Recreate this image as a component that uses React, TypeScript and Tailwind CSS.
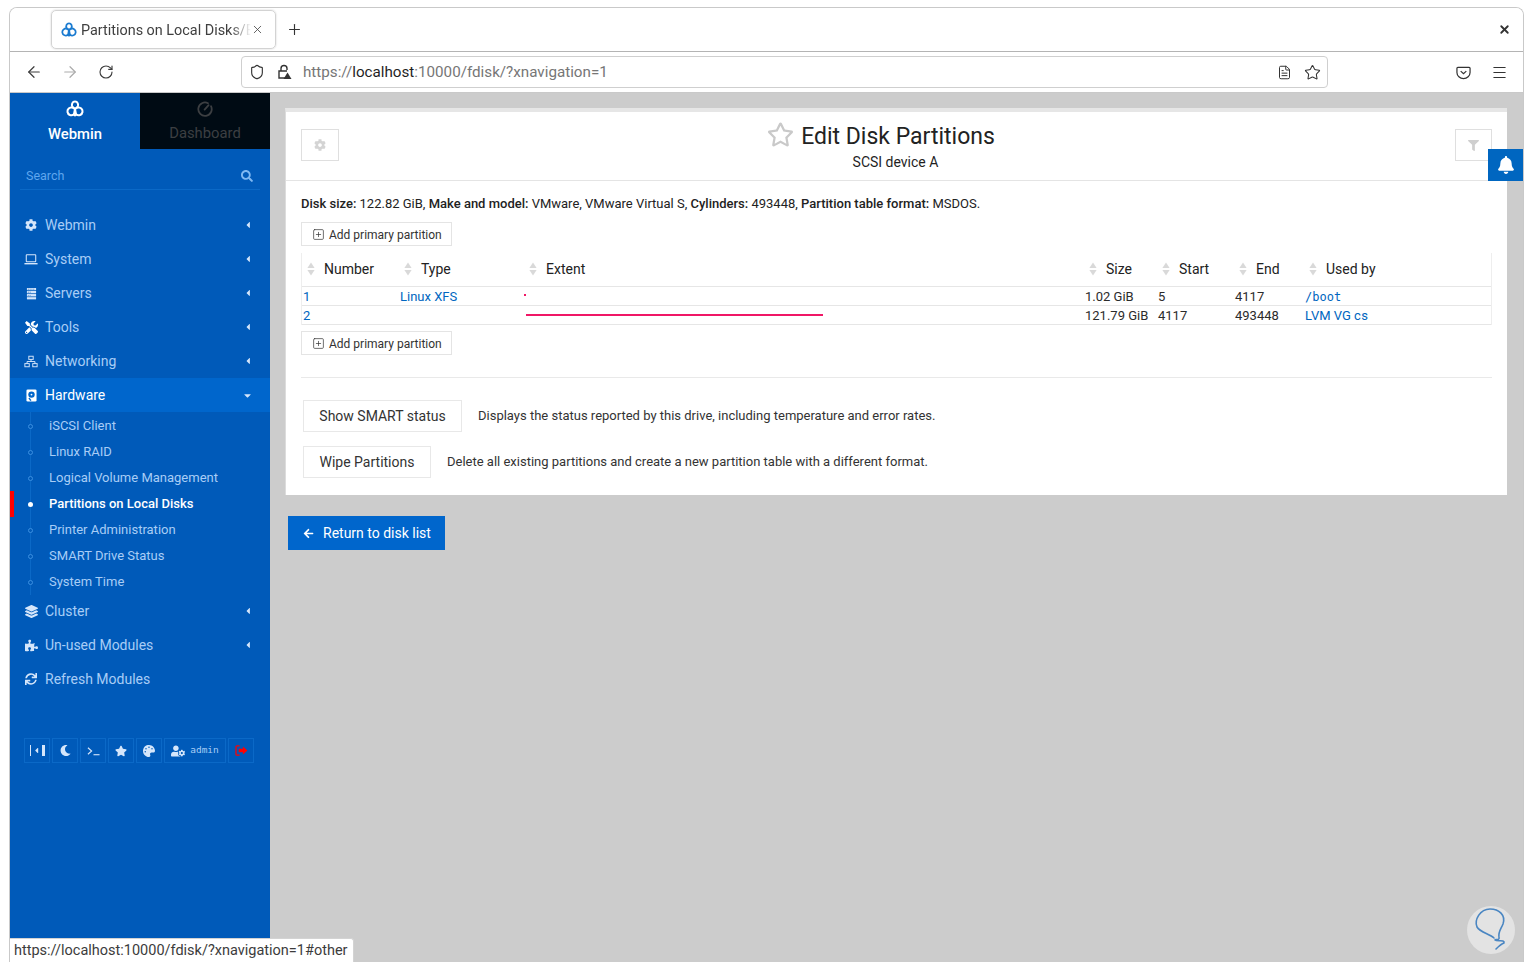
import React from "react";
import {
  FaCog, FaTools, FaLayerGroup, FaPuzzlePiece, FaSync, FaStar, FaPalette, FaMoon, FaUserCog,
  FaFilter, FaBell, FaArrowLeft, FaSearch, FaRegStar, FaCaretLeft, FaCaretDown,
} from "react-icons/fa";
import { ArrowLeft, ArrowRight, RotateCw, Shield, Plus, X, Menu, SquarePlus, Star, FileText } from "lucide-react";

function Logo({ className }: { className?: string }) {
  return (
    <svg viewBox="0 0 24 24" className={className} fill="none" stroke="currentColor" strokeWidth="2.7" strokeLinejoin="round" strokeLinecap="round">
      <path d="M12 12 L8.6 9.6 C6.6 6 8.6 2 12 2 C15.4 2 17.4 6 15.4 9.6 Z" />
      <path d="M12 12 L8.6 9.6 C4.6 9.6 1.4 12.4 2 16 C2.6 19.8 7 21.6 10.6 19.2 Z" />
      <path d="M12 12 L15.4 9.6 C19.4 9.6 22.6 12.4 22 16 C21.4 19.8 17 21.6 13.4 19.2 Z" />
      <path d="M10.6 19.2 C11.4 21 12.6 21 13.4 19.2" />
    </svg>
  );
}

function LaptopIcon() {
  return (
    <svg viewBox="0 0 16 14" className="w-[15px] h-[13px]" fill="none" stroke="currentColor" strokeWidth="1.2">
      <rect x="2.6" y="1.6" width="10.8" height="8" rx="0.6" />
      <path d="M0.5 11.8h15" strokeWidth="1.6" />
    </svg>
  );
}

function ServerIcon() {
  return (
    <svg viewBox="0 0 12 14" className="w-[11px] h-[13px]" fill="currentColor">
      <path d="M1 1h10v2.4H1z" />
      <path d="M1 4.2h10v2.6H1z" />
      <path d="M1 7.6h10v2.6H1z" />
      <path d="M1 11h10v2.4H1z" />
      <path d="M2 1.8h1v.8H2zM4 1.8h1v.8H4zM6 1.8h1v.8H6zM8 1.8h1v.8H8zM2 5.2h1v.6H2zM4 5.2h1v.6H4zM2 8.6h1v.6H2zM4 8.6h1v.6H4z" fill="#005ab9" />
    </svg>
  );
}

function NetIcon() {
  return (
    <svg viewBox="0 0 16 14" className="w-[15px] h-[13px]" fill="none" stroke="currentColor" strokeWidth="1.1">
      <rect x="5.5" y="1" width="5" height="3.6" />
      <rect x="1" y="9.4" width="5" height="3.6" />
      <rect x="10" y="9.4" width="5" height="3.6" />
      <path d="M8 4.6V7M3.5 9.4V7h9v2.4" />
    </svg>
  );
}

function DiskIcon() {
  return (
    <svg viewBox="0 0 12 14" className="w-[11px] h-[13px]">
      <rect x="0.5" y="0.5" width="11" height="13" rx="1.4" fill="#ffffff" />
      <circle cx="6" cy="6" r="3.5" fill="#0066cc" />
      <circle cx="6" cy="6" r="1" fill="#ffffff" />
      <path d="M4 9.5l2 2.6-1.4.8-2-2.8z" fill="#0066cc" />
    </svg>
  );
}

function NavItem({ icon, label, active, open, plain }: { icon: React.ReactNode; label: string; active?: boolean; open?: boolean; plain?: boolean }) {
  return (
    <div className={`h-[34px] flex items-center pl-[14px] pr-[17px] ${active ? "bg-[#0066cc] text-white" : "text-[#a8cdf6]"}`}>
      <span className={`w-[14px] flex justify-center ${active ? "text-white" : "text-[#d5e6fb]"}`}>{icon}</span>
      <span className="ml-[7px] text-[14px] flex-1">{label}</span>
      {open ? <FaCaretDown size={11} className="text-[#d5e6fb]" /> : !plain && <FaCaretLeft size={10} className="text-[#d5e6fb]" />}
    </div>
  );
}

function SubItem({ label, current }: { label: string; current?: boolean }) {
  return (
    <div className={`relative h-[26px] flex items-center pl-[39px] text-[13px] ${current ? "text-white font-medium" : "text-[#a8cdf6]"}`}>
      {current && <span className="absolute left-0 top-0 h-[26px] w-[4px] bg-[#ff0000]" />}
      <span className={`absolute left-[18px] top-[11px] w-[5px] h-[5px] rounded-full ${current ? "bg-white" : "border border-[#3b8fe0] bg-[#005ab9]"}`} />
      {label}
    </div>
  );
}

function IconBox({ children, className }: { children: React.ReactNode; className?: string }) {
  return (
    <div className={`h-[25px] border border-[#0b69c7] flex items-center justify-center text-[#d5e6fb] ${className ?? "w-[26px]"}`}>{children}</div>
  );
}

function HeadCell({ label }: { label: string }) {
  return (
    <div className="flex items-center">
      <svg viewBox="0 0 8 14" className="w-[8px] h-[14px] mr-[9px] text-[#d9d9d9]" fill="currentColor">
        <path d="M4 0.5 7.6 6H0.4Z" />
        <path d="M4 13.5 7.6 8H0.4Z" />
      </svg>
      <span>{label}</span>
    </div>
  );
}

function AddButton({ className }: { className: string }) {
  return (
    <button className={`${className} flex items-center h-[24px] w-[151px] border border-[#e4e4e4] pl-[10px] text-[12px] text-[#333]`}>
      <SquarePlus size={13} strokeWidth={1.3} />
      <span className="ml-[4px] mt-[1px]">Add primary partition</span>
    </button>
  );
}

const rowGrid = "grid grid-cols-[97px_125px_560px_73px_77px_70px_1fr] items-center";

export default function App() {
  return (
    <div className="w-[1533px] h-[971px] bg-white pt-[7px] pl-[9px] pr-[9px] overflow-hidden font-['Roboto',sans-serif]">
      <div className="relative w-[1515px] h-[955px] border border-[#c9c9c9] border-b-0 rounded-t-[8px] overflow-hidden flex flex-col bg-white">
        {/* tab strip */}
        <div className="h-[44px] shrink-0 border-b border-[#b4b4b4] flex items-center pl-[41px] pr-[12px] bg-white">
          <div className="w-[225px] h-[39px] rounded-[5px] border border-[#d3d3d3] shadow-[0_0_2px_rgba(0,0,0,0.2)] flex items-center pl-[9px] pr-[12px] pt-[2px] text-[14.4px] text-[#404040]">
            <Logo className="w-[16px] h-[16px] text-[#1b7bd0] shrink-0 -mt-[2px]" />
            <span className="ml-[4px] w-[170px] shrink-0 whitespace-nowrap [mask-image:linear-gradient(to_right,black_88%,transparent)]">Partitions on Local Disks/E</span>
            <X size={13} strokeWidth={1.5} className="shrink-0 text-[#444] -mt-[2px]" />
          </div>
          <Plus size={17} strokeWidth={1.6} className="ml-[10px] text-[#333]" />
          <span className="flex-1" />
          <X size={13} strokeWidth={3.4} className="text-[#333]" />
        </div>
        {/* toolbar */}
        <div className="h-[40px] shrink-0 flex items-center pl-[15px] bg-white">
          <ArrowLeft size={18} strokeWidth={1.6} className="text-[#3c3c3c]" />
          <ArrowRight size={18} strokeWidth={1.6} className="ml-[18px] text-[#ababab]" />
          <RotateCw size={16} strokeWidth={1.7} className="ml-[19px] text-[#3c3c3c]" />
          <div className="ml-[127px] w-[1087px] h-[32px] rounded-[4px] border border-[#cfcfcf] flex items-center pl-[7px] pr-[6px] text-[15.2px] text-[#767676]">
            <Shield size={16} strokeWidth={1.7} className="text-[#333]" />
            <svg viewBox="0 0 16 16" className="ml-[11px] w-[16px] h-[16px] text-[#333]" fill="none" stroke="currentColor" strokeWidth="1.4">
              <path d="M5 7V4.5a3 3 0 0 1 6 0V6" />
              <path d="M9 14H3V7h8" />
              <path d="M11.5 8.5 15.5 15h-8Z" fill="currentColor" stroke="none" />
            </svg>
            <span className="ml-[11px]">https://<span className="text-[#1f1f1f]">localhost</span>:10000/fdisk/?xnavigation=1</span>
            <span className="flex-1" />
            <FileText size={15} strokeWidth={1.6} className="text-[#333]" />
            <Star size={17} strokeWidth={1.5} className="ml-[12px] text-[#333]" />
          </div>
          <svg viewBox="0 0 16 16" className="ml-[128px] w-[15px] h-[15px] text-[#333]" fill="none" stroke="currentColor" strokeWidth="1.3">
            <path d="M2 2.5h12a1 1 0 0 1 1 1V8a7 6.5 0 0 1-14 0V3.5a1 1 0 0 1 1-1Z" />
            <path d="M5 6.5l3 2.8 3-2.8" />
          </svg>
          <Menu size={17} strokeWidth={1.5} className="ml-[20px] text-[#333]" />
        </div>
        {/* content */}
        <div className="flex-1 flex min-h-0 border-t border-[#c9c9c9]">
          <aside className="w-[260px] shrink-0 bg-[#005ab9] flex flex-col">
            <div className="flex h-[56px] shrink-0">
              <div className="w-[130px] flex flex-col items-center pt-[7px] text-white">
                <Logo className="w-[18px] h-[18px]" />
                <span className="mt-[6px] text-[14.8px] leading-[20px] font-medium">Webmin</span>
              </div>
              <div className="w-[130px] h-[56px] bg-[#000b14] flex flex-col items-center pt-[8px] text-[#3c3f42]">
                <svg viewBox="0 0 16 16" className="w-[16px] h-[16px]" fill="none" stroke="currentColor" strokeWidth="1.8" strokeLinecap="round">
                  <path d="M11 2.2A6.7 6.7 0 1 0 14 5.2" />
                  <path d="M7.6 8.6 11.6 4.2" />
                </svg>
                <span className="mt-[6px] text-[14.8px] leading-[20px]">Dashboard</span>
              </div>
            </div>
            <div className="mx-[10px] mt-[10px] h-[31px] pt-[4px] border-b border-[#0b69c7] flex items-center pl-[6px] text-[12.5px] text-[#5fa6ee]">
              <span className="flex-1">Search</span>
              <FaSearch size={12} className="mr-[7px] text-[#7fb8f2]" />
            </div>
            <div className="mt-[18px]">
              <NavItem icon={<FaCog size={12} />} label="Webmin" />
              <NavItem icon={<LaptopIcon />} label="System" />
              <NavItem icon={<ServerIcon />} label="Servers" />
              <NavItem icon={<FaTools size={13} className="text-white" />} label="Tools" />
              <NavItem icon={<NetIcon />} label="Networking" />
              <NavItem icon={<DiskIcon />} label="Hardware" active open />
              <div className="relative pt-[1px] -mb-[1px]">
                <span className="absolute left-[20px] top-0 bottom-0 w-px bg-[#0b69c7]" />
                <SubItem label="iSCSI Client" />
                <SubItem label="Linux RAID" />
                <SubItem label="Logical Volume Management" />
                <SubItem label="Partitions on Local Disks" current />
                <SubItem label="Printer Administration" />
                <SubItem label="SMART Drive Status" />
                <SubItem label="System Time" />
              </div>
              <NavItem icon={<FaLayerGroup size={13} />} label="Cluster" />
              <NavItem icon={<FaPuzzlePiece size={13} />} label="Un-used Modules" />
              <NavItem icon={<FaSync size={12} />} label="Refresh Modules" plain />
            </div>
            <div className="mt-[42px] ml-[14px] flex gap-[2px]">
              <IconBox>
                <span className="flex items-center gap-[1px]"><span className="w-px h-[11px] bg-[#d5e6fb]" /><FaCaretLeft size={9} /><span className="w-[3px] h-[11px] bg-[#d5e6fb]" /></span>
              </IconBox>
              <IconBox><FaMoon size={11} /></IconBox>
              <IconBox>
                <svg viewBox="0 0 14 10" className="w-[13px] h-[10px]" fill="none" stroke="currentColor" strokeWidth="1.2">
                  <path d="M1 1.5 5 5 1 8.5" />
                  <path d="M7 9h6.5" />
                </svg>
              </IconBox>
              <IconBox><FaStar size={12} /></IconBox>
              <IconBox><FaPalette size={12} /></IconBox>
              <IconBox className="w-[62px]">
                <FaUserCog size={14} />
                <span className="ml-[5px] font-['DejaVu_Sans_Mono',monospace] text-[9.5px] text-[#a8cdf6]">admin</span>
              </IconBox>
              <IconBox>
                <svg viewBox="0 0 14 12" className="w-[13px] h-[11px] text-[#ff0000]" fill="none" stroke="currentColor" strokeWidth="1.4">
                  <path d="M5 1H2a1 1 0 0 0-1 1v8a1 1 0 0 0 1 1h3" />
                  <path d="M4 4.2h4.5V1.6L13.5 6l-5 4.4V7.8H4z" fill="currentColor" stroke="none" />
                </svg>
              </IconBox>
            </div>
          </aside>
          <main className="flex-1 bg-[#cccccc] pl-[15px] pr-[16px] pt-[15px] relative">
            <section className="bg-white border-t-[4px] border-[#e6e6e6] border-l border-l-[#dcdcdc] text-[#1f1f1f] w-[1222px]">
              <div className="h-[69px] border-b border-[#e4e4e4] flex items-start justify-between px-[15px] pt-[17px] relative">
                <div className="w-[38px] h-[32px] border border-[#dfdfdf] flex items-center justify-center text-[#d4d4d4]"><FaCog size={12} /></div>
                <div className="flex flex-col items-center -mt-[7px] mr-[32px]">
                  <div className="flex items-center">
                    <FaRegStar size={27} className="text-[#c9c9c9] mr-[7px] -mt-[5px]" />
                    <span className="text-[23px] text-[#222] leading-[30px]">Edit Disk Partitions</span>
                  </div>
                  <span className="text-[14px] leading-[20px] ml-[29px]">SCSI device A</span>
                </div>
                <div className="w-[37px] h-[32px] border border-[#dfdfdf] flex items-center justify-center text-[#cfcfcf]"><FaFilter size={11} /></div>
              </div>
              <div className="px-[15px]">
                <p className="mt-[15px] text-[13px] leading-[16px] text-[#222]">
                  <b className="font-medium">Disk size:</b> 122.82 GiB, <b className="font-medium">Make and model:</b> VMware, VMware Virtual S, <b className="font-medium">Cylinders:</b> 493448, <b className="font-medium">Partition table format:</b> MSDOS.
                </p>
                <AddButton className="mt-[10px]" />
                <div className="mt-[7px] border-l border-r border-[#eeeeee] text-[13px] text-[#2b2b2b]">
                  <div className={`${rowGrid} h-[34px] pb-[1px] border-b border-[#e6e6e6] text-[14px] text-[#222] pl-[5px]`}>
                    <HeadCell label="Number" />
                    <HeadCell label="Type" />
                    <HeadCell label="Extent" />
                    <HeadCell label="Size" />
                    <HeadCell label="Start" />
                    <HeadCell label="End" />
                    <HeadCell label="Used by" />
                  </div>
                  <div className={`${rowGrid} h-[19px] border-b border-[#e6e6e6] pl-[1px]`}>
                    <a className="text-[#0066c0]">1</a>
                    <a className="text-[#0066c0]">Linux XFS</a>
                    <div className="relative h-[3px]"><span className="absolute -left-[1px] -top-[1px] w-[2px] h-[2px] bg-[#f01766]" /></div>
                    <span>1.02 GiB</span>
                    <span>5</span>
                    <span>4117</span>
                    <a className="text-[#0066c0] font-['DejaVu_Sans_Mono',monospace] text-[12px]">/boot</a>
                  </div>
                  <div className={`${rowGrid} h-[19px] border-b border-[#e6e6e6] pl-[1px]`}>
                    <a className="text-[#0066c0]">2</a>
                    <span />
                    <div className="pl-[1px] -mt-[1px]"><div className="w-[297px] h-[2px] bg-[#f01766]" /></div>
                    <span className="whitespace-nowrap">121.79 GiB</span>
                    <span>4117</span>
                    <span>493448</span>
                    <a className="text-[#0066c0]">LVM VG <span className="tracking-[0.5px]">cs</span></a>
                  </div>
                </div>
                <AddButton className="mt-[6px]" />
                <div className="mt-[22px] border-t border-[#e9e9e9]" />
                <div className="mt-[22px] ml-[2px] flex items-center">
                  <button className="h-[32px] w-[159px] border border-[#e8e8e8] text-[14px] text-[#333]">Show SMART status</button>
                  <span className="ml-[16px] text-[13px] text-[#333]">Displays the status reported by this drive, including temperature and error rates.</span>
                </div>
                <div className="mt-[14px] ml-[2px] pb-[17px] flex items-center">
                  <button className="h-[32px] w-[128px] border border-[#e8e8e8] text-[14px] text-[#333]">Wipe Partitions</button>
                  <span className="ml-[16px] text-[13px] text-[#333]">Delete all existing partitions and create a new partition table with a different format.</span>
                </div>
              </div>
            </section>
            <button className="mt-[21px] ml-[3px] h-[34px] w-[157px] bg-[#0066cc] text-white text-[14px] flex items-center pl-[15px]">
              <FaArrowLeft size={11} />
              <span className="ml-[9px]">Return to disk list</span>
            </button>
            {/* notification bell */}
            <div className="absolute right-0 top-[56px] w-[35px] h-[32px] bg-[#0066c0] flex items-center justify-center text-white"><FaBell size={18} /></div>
            {/* help mark */}
            <div className="absolute right-[8px] bottom-[8px] w-[48px] h-[48px] rounded-full bg-[#e3e3e3]">
              <svg viewBox="0 0 48 48" className="w-[48px] h-[48px]" fill="none" stroke="#4a86c2" strokeWidth="1.6" strokeLinecap="round" strokeLinejoin="round">
                <path d="M27 32 C22 28 13 26 10 21 C7 14 13 3 23 3 C32 3 39 9 36 18 C34 23 31 26 32 31 C33 35 28 33 28 34 C30 36 38 33 37 37 C34 38 31 41 29 43" />
              </svg>
            </div>
          </main>
        </div>
        {/* status overlay */}
        <div className="absolute left-0 bottom-0 h-[24px] w-[344px] bg-white border-t border-r border-[#d3d3d3] rounded-tr-[3px] flex items-center pl-[4px] text-[14.5px] text-[#3c3c3c] whitespace-nowrap">https://localhost:10000/fdisk/?xnavigation=1#other</div>
      </div>
    </div>
  );
}
